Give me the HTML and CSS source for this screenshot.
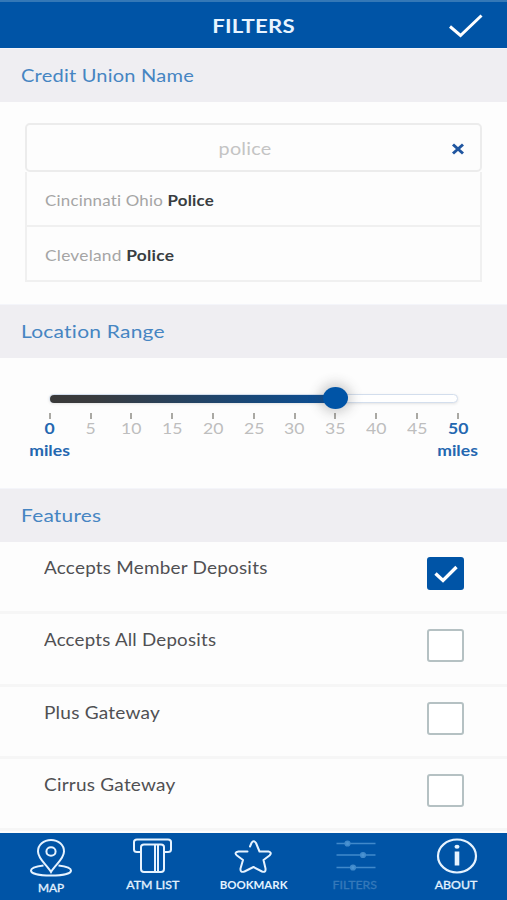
FILE: index.html
```html
<!DOCTYPE html>
<html lang="en">
<head>
<meta charset="utf-8">
<title>Filters</title>
<link rel="stylesheet" href="styles.css">
</head>
<body>
<div class="app">
  <header class="topbar">
    <h1><span class="t title">FILTERS</span></h1>
    <svg class="apply" width="36" height="26" viewBox="0 0 36 26"><path d="M2 14.500 12.500 23.500 33.500 3.500" fill="none" stroke="#fff" stroke-width="3"/></svg>
  </header>

  <h2 class="band"><span class="t credit">Credit Union Name</span></h2>
  <section class="search">
    <div class="field">
      <span class="t query">police</span>
      <svg class="clear" width="14" height="12" viewBox="0 0 14 12"><path d="M2 1.500 12 10.500M12 1.500 2 10.500" stroke="#2056a0" stroke-width="3" fill="none"/></svg>
    </div>
    <div class="option"><span class="t cincinnati">Cincinnati Ohio <b>Police</b></span></div>
    <div class="option"><span class="t cleveland">Cleveland <b>Police</b></span></div>
  </section>

  <h2 class="band"><span class="t location">Location Range</span></h2>
  <section class="range">
    <div class="track"><div class="fill"></div><div class="thumb"></div></div>
    <div class="scale">
      <div class="mark end"><span>0</span><span class="unit">miles</span></div>
      <div class="mark"><span>5</span></div>
      <div class="mark"><span>10</span></div>
      <div class="mark"><span>15</span></div>
      <div class="mark"><span>20</span></div>
      <div class="mark"><span>25</span></div>
      <div class="mark"><span>30</span></div>
      <div class="mark"><span>35</span></div>
      <div class="mark"><span>40</span></div>
      <div class="mark"><span>45</span></div>
      <div class="mark end"><span>50</span><span class="unit">miles</span></div>
    </div>
  </section>

  <h2 class="band"><span class="t features">Features</span></h2>
  <section class="list">
    <div class="row"><span class="t member">Accepts Member Deposits</span>
      <span class="box on"><svg width="26" height="20" viewBox="0 0 26 20"><path d="M2.500 9.500 10 16.500 23.500 3" fill="none" stroke="#fff" stroke-width="3.400"/></svg></span></div>
    <div class="row"><span class="t all">Accepts All Deposits</span><span class="box"></span></div>
    <div class="row"><span class="t plus">Plus Gateway</span><span class="box"></span></div>
    <div class="row"><span class="t cirrus">Cirrus Gateway</span><span class="box"></span></div>
  </section>

  <nav class="tabs">
    <div class="tab map">
      <svg width="46" height="42" viewBox="0 0 46 42"><g fill="none" stroke="#e6f3ff" stroke-width="2"><path d="M23 35C19 28 10 22 10 14.500C10 8 15.500 3 23 3S36 8 36 14.500C36 22 27 28 23 35Z"/><ellipse cx="23" cy="14.500" rx="4.600" ry="4.200"/><path d="M15.500 28.500C7 29.500 3 31.500 3 33.500C3 36.500 11 38.500 23 38.500S43 36.500 43 33.500C43 31.500 39 29.500 30.500 28.500"/></g></svg>
      <span>MAP</span>
    </div>
    <div class="tab atm">
      <svg width="46" height="42" viewBox="0 0 46 42"><g fill="none" stroke="#e6f3ff" stroke-width="2"><path d="M11 15H8Q5 15 5 12.500V5Q5 2.500 8 2.500H39Q42 2.500 42 5V12.500Q42 15 39 15H36"/><path d="M15 7.500H32Q35 7.500 35 10V32Q35 35 32 35H15Q12 35 12 32V10Q12 7.500 15 7.500ZM26 8V35M29 8V35"/></g></svg>
      <span>ATM LIST</span>
    </div>
    <div class="tab bookmark">
      <svg width="46" height="42" viewBox="0 0 46 42"><path d="M17.500 14.500H8.500Q3.500 15.500 7 18.500L13 23 10.500 31.500Q10 36 14.500 34.500L23.500 30 32 34.500Q36 36 35.500 31.500L33.500 23 39.500 18.500Q42.500 15.500 38.500 14.500H29.500L26 6Q23.500 2.500 21.500 6L20 9.500" fill="none" stroke="#e6f3ff" stroke-width="2" stroke-linecap="round" stroke-linejoin="round"/></svg>
      <span>BOOKMARK</span>
    </div>
    <div class="tab filters">
      <svg width="46" height="42" viewBox="0 0 46 42"><g stroke="#4089cb" stroke-width="1.600" fill="#4b94d3"><path d="M4.500 6.500H43.500M4.500 18H43.500M4.500 30.500H43.500"/><circle cx="15.500" cy="6.500" r="2.300"/><circle cx="31" cy="18" r="2.300"/><circle cx="21" cy="30.500" r="2.300"/></g></svg>
      <span>FILTERS</span>
    </div>
    <div class="tab about">
      <svg width="46" height="42" viewBox="0 0 46 42"><ellipse cx="24" cy="19" rx="19" ry="16.500" fill="none" stroke="#e6f3ff" stroke-width="2.200"/><path d="M24 14.500V28.500" stroke="#e6f3ff" stroke-width="4.600"/><ellipse cx="24" cy="9.800" rx="2.500" ry="2" fill="#e6f3ff"/></svg>
      <span>ABOUT</span>
    </div>
  </nav>
</div>
</body>
</html>
```
FILE: styles.css
```css
* { box-sizing: border-box; }
body { margin: 0; background: #fdfdfd; font-family: Lato, "Liberation Sans", sans-serif; color: #505053; }
.app { width: 507px; height: 900px; display: flex; flex-direction: column; overflow: hidden; }
h1, h2 { margin: 0; font-weight: 400; }

/* Wide lettering: each label is stretched from its left edge */
.t { display: inline-block; white-space: nowrap; letter-spacing: 0.2px; transform-origin: left center; }
.title { transform-origin: center; transform: scaleX(1.165); }
.credit { transform: scaleX(1.113); }
.location { transform: scaleX(1.165); }
.features { transform: scaleX(1.16); }
.cincinnati { transform: scaleX(1.055); }
.cleveland { transform: scaleX(1.085); }
.member { transform: scaleX(1.112); }
.all { transform: scaleX(1.1); }
.plus { transform: scaleX(1.12); }
.cirrus { transform: scaleX(1.117); }

.topbar { height: 48px; flex: none; background: #0054a6; border-top: 2px solid #3478b7; display: grid; grid-template-columns: 1fr auto 1fr; align-items: center; }
h1 { grid-column: 2; font-size: 19px; line-height: 24px; font-weight: 700; color: #e8f4ff; padding-top: 1px; }
.apply { justify-self: end; margin-right: 23px; }

.band { height: 54px; flex: none; padding-left: 21px; background: #efeef2; border-top: 1px solid #f4f5fa; font-size: 18px; line-height: 52px; color: #4685c2; }

.search { height: 202px; flex: none; padding: 21px 25px 0; }
.field { height: 49px; border: 2px solid #ececec; border-radius: 5px; display: grid; grid-template-columns: 1fr auto 1fr; align-items: center; }
.query { grid-column: 2; color: #c4c4c4; font-size: 18px; transform-origin: center; transform: translateX(-8px) scaleX(1.1); }
.clear { justify-self: end; margin-right: 15px; margin-top: 3px; }
.option { height: 55px; padding-left: 18px; border: 2px solid #f0f0f0; border-top: 0; font-size: 16px; line-height: 55px; color: #a5a5a5; }
.option b { color: #393d41; }

.range { height: 130px; flex: none; padding-top: 36px; }
.track { position: relative; width: 409px; height: 9px; margin-left: 49px; border: 1px solid #d3deed; border-radius: 5px; background: #fff; box-shadow: 0 1px 3px #e4e4e4; }
.fill { width: 286px; height: 8px; margin: -0.5px; border-radius: 4px; background: linear-gradient(90deg, #393939 0%, #393b3e 15%, #16497d 75%, #0b5099); }
.thumb { position: absolute; left: 273px; top: -8px; width: 25px; height: 22px; border-radius: 50%; background: #0054a6; box-shadow: 0 0 12px 4px rgba(60, 60, 60, .24); }
.scale { display: grid; grid-template-columns: repeat(11, 40.8px); margin: 10px 0 0 29.500px; }
.mark { display: flex; flex-direction: column; align-items: center; font-size: 16px; line-height: 22px; color: #bebebe; }
.mark::before { content: ""; width: 2px; height: 6px; margin-bottom: -2px; background: #aaa9a4; }
.mark span { transform: scaleX(1.1); }
.end { color: #2467b0; font-weight: 700; }

.list { height: 291px; flex: none; }
.row { height: 72.300px; padding: 0 43px 0 44px; border-bottom: 3px solid #f6f6f6; display: flex; justify-content: space-between; font-size: 17px; line-height: 52px; }
.box { width: 37px; height: 33px; margin-top: 15px; flex: none; border: 2px solid #b5c1c3; border-radius: 3px; background: #fff; display: flex; align-items: center; justify-content: center; }
.on { background: #0054a6; border-color: #0054a6; }

.tabs { flex: 1; background: #0054a6; display: grid; grid-template-columns: repeat(5, 101.200px); }
.tab { display: flex; flex-direction: column; align-items: center; padding: 4px 0 0 1px; font-size: 11px; line-height: 12px; font-weight: 700; color: #e3f2ff; }
.tab span { transform: scaleX(1.04); }
.map span { margin-top: 3px; font-weight: 400; -webkit-text-stroke: 0.3px #e3f2ff; transform: scaleX(1.08); }
.atm span, .filters span, .about span { font-weight: 400; -webkit-text-stroke: 0.3px currentColor; transform: scaleX(1.12); }
.filters { color: #3579ba; }
```
